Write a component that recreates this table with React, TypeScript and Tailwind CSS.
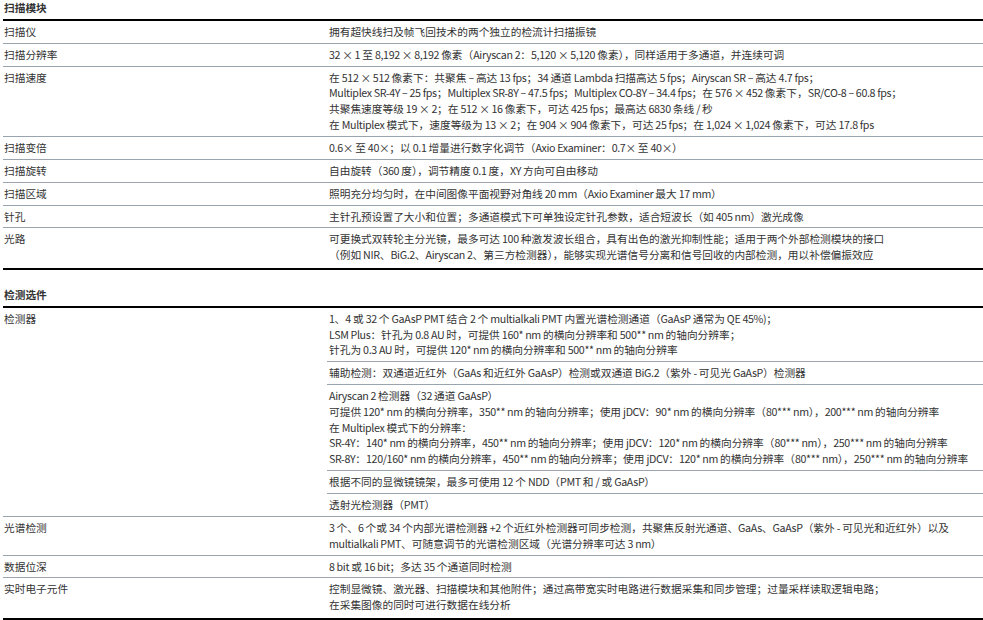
type Row = { label: string; cells: string[][] };
type Section = { title: string; rows: Row[] };

const sections: Section[] = [
  {
    title: "扫描模块",
    rows: [
      { label: "扫描仪", cells: [["拥有超快线扫及帧飞回技术的两个独立的检流计扫描振镜"]] },
      {
        label: "扫描分辨率",
        cells: [["32 × 1 至 8,192 × 8,192 像素（Airyscan 2：5,120 × 5,120 像素），同样适用于多通道，并连续可调"]],
      },
      {
        label: "扫描速度",
        cells: [
          [
            "在 512 × 512 像素下：共聚焦 – 高达 13 fps；34 通道 Lambda 扫描高达 5 fps；Airyscan SR – 高达 4.7 fps；",
            "Multiplex SR-4Y – 25 fps；Multiplex SR-8Y – 47.5 fps；Multiplex CO-8Y – 34.4 fps；在 576 × 452 像素下，SR/CO-8 – 60.8 fps；",
            "共聚焦速度等级 19 × 2；在 512 × 16 像素下，可达 425 fps；最高达 6830 条线 / 秒",
            "在 Multiplex 模式下，速度等级为 13 × 2；在 904 × 904 像素下，可达 25 fps；在 1,024 × 1,024 像素下，可达 17.8 fps",
          ],
        ],
      },
      { label: "扫描变倍", cells: [["0.6× 至 40×；以 0.1 增量进行数字化调节（Axio Examiner：0.7× 至 40×）"]] },
      { label: "扫描旋转", cells: [["自由旋转（360 度），调节精度 0.1 度，XY 方向可自由移动"]] },
      { label: "扫描区域", cells: [["照明充分均匀时，在中间图像平面视野对角线 20 mm（Axio Examiner 最大 17 mm）"]] },
      { label: "针孔", cells: [["主针孔预设置了大小和位置；多通道模式下可单独设定针孔参数，适合短波长（如 405 nm）激光成像"]] },
      {
        label: "光路",
        cells: [
          [
            "可更换式双转轮主分光镜，最多可达 100 种激发波长组合，具有出色的激光抑制性能；适用于两个外部检测模块的接口",
            "（例如 NIR、BiG.2、Airyscan 2、第三方检测器），能够实现光谱信号分离和信号回收的内部检测，用以补偿偏振效应",
          ],
        ],
      },
    ],
  },
  {
    title: "检测选件",
    rows: [
      {
        label: "检测器",
        cells: [
          [
            "1、4 或 32 个 GaAsP PMT 结合 2 个 multialkali PMT 内置光谱检测通道（GaAsP 通常为 QE 45%)；",
            "LSM Plus：针孔为 0.8 AU 时，可提供 160* nm 的横向分辨率和 500** nm 的轴向分辨率；",
            "针孔为 0.3 AU 时，可提供 120* nm 的横向分辨率和 500** nm 的轴向分辨率",
          ],
          ["辅助检测：双通道近红外（GaAs 和近红外 GaAsP）检测或双通道 BiG.2（紫外 - 可见光 GaAsP）检测器"],
          [
            "Airyscan 2 检测器（32 通道 GaAsP）",
            "可提供 120* nm 的横向分辨率，350** nm 的轴向分辨率；使用 jDCV：90* nm 的横向分辨率（80*** nm），200*** nm 的轴向分辨率",
            "在 Multiplex 模式下的分辨率：",
            "SR-4Y：140* nm 的横向分辨率，450** nm 的轴向分辨率；使用 jDCV：120* nm 的横向分辨率（80*** nm），250*** nm 的轴向分辨率",
            "SR-8Y：120/160* nm 的横向分辨率，450** nm 的轴向分辨率；使用 jDCV：120* nm 的横向分辨率（80*** nm），250*** nm 的轴向分辨率",
          ],
          ["根据不同的显微镜镜架，最多可使用 12 个 NDD（PMT 和 / 或 GaAsP）"],
          ["透射光检测器（PMT）"],
        ],
      },
      {
        label: "光谱检测",
        cells: [
          [
            "3 个、6 个或 34 个内部光谱检测器 +2 个近红外检测器可同步检测，共聚焦反射光通道、GaAs、GaAsP（紫外 - 可见光和近红外）以及",
            "multialkali PMT、可随意调节的光谱检测区域（光谱分辨率可达 3 nm）",
          ],
        ],
      },
      { label: "数据位深", cells: [["8 bit 或 16 bit；多达 35 个通道同时检测"]] },
      {
        label: "实时电子元件",
        cells: [
          [
            "控制显微镜、激光器、扫描模块和其他附件；通过高带宽实时电路进行数据采集和同步管理；过量采样读取逻辑电路；",
            "在采集图像的同时可进行数据在线分析",
          ],
        ],
      },
    ],
  },
];

const CJK = /[\u3000-\u303f\u4e00-\u9fff\uff00-\uffef]/;

// latin runs set a little tighter than the CJK ones, like the print font
const Line = ({ text }: { text: string }) => {
  const parts = text.split(/([\u3000-\u303f\u4e00-\u9fff\uff00-\uffef]+)/).filter(Boolean);
  return (
    <div className="whitespace-nowrap">
      {parts.map((p, i) =>
        CJK.test(p) ? (
          <span key={i}>{p}</span>
        ) : (
          <span key={i} className="tracking-[-0.36px]">
            {p}
          </span>
        )
      )}
    </div>
  );
};

const SpecTable = ({ section, first }: { section: Section; first: boolean }) => (
  <div className={first ? "" : "mt-[17px]"}>
    <h2 className="font-bold pl-[1px] pb-[3px] border-b-2 border-black">{section.title}</h2>
    <div className="border-b-2 border-black">
      {section.rows.map((row, i) => {
        const last = i === section.rows.length - 1;
        return (
          <div key={row.label} className={`grid grid-cols-[324px_1fr] ${last ? "" : "border-b border-[#9aa4ae]"}`}>
            <div className="pl-[1px] pt-[3px]">{row.label}</div>
            <div>
              {row.cells.map((lines, j) => (
                <div
                  key={j}
                  className={`pl-[2px] pt-[3px] ${last ? "pb-[5.5px]" : "pb-[3.3px]"} ${
                    j < row.cells.length - 1 ? "border-b border-[#9aa4ae]" : ""
                  }`}
                >
                  {lines.map((l) => (
                    <Line key={l} text={l} />
                  ))}
                </div>
              ))}
            </div>
          </div>
        );
      })}
    </div>
  </div>
);

export default function App() {
  return (
    <div className="w-[983px] h-[620px] overflow-hidden bg-white pl-[3px] text-[10.7px] leading-[15.67px] text-[#333333] font-['Noto_Sans_CJK_SC','Noto_Sans',sans-serif]">
      {sections.map((s, i) => (
        <SpecTable key={s.title} section={s} first={i === 0} />
      ))}
    </div>
  );
}
